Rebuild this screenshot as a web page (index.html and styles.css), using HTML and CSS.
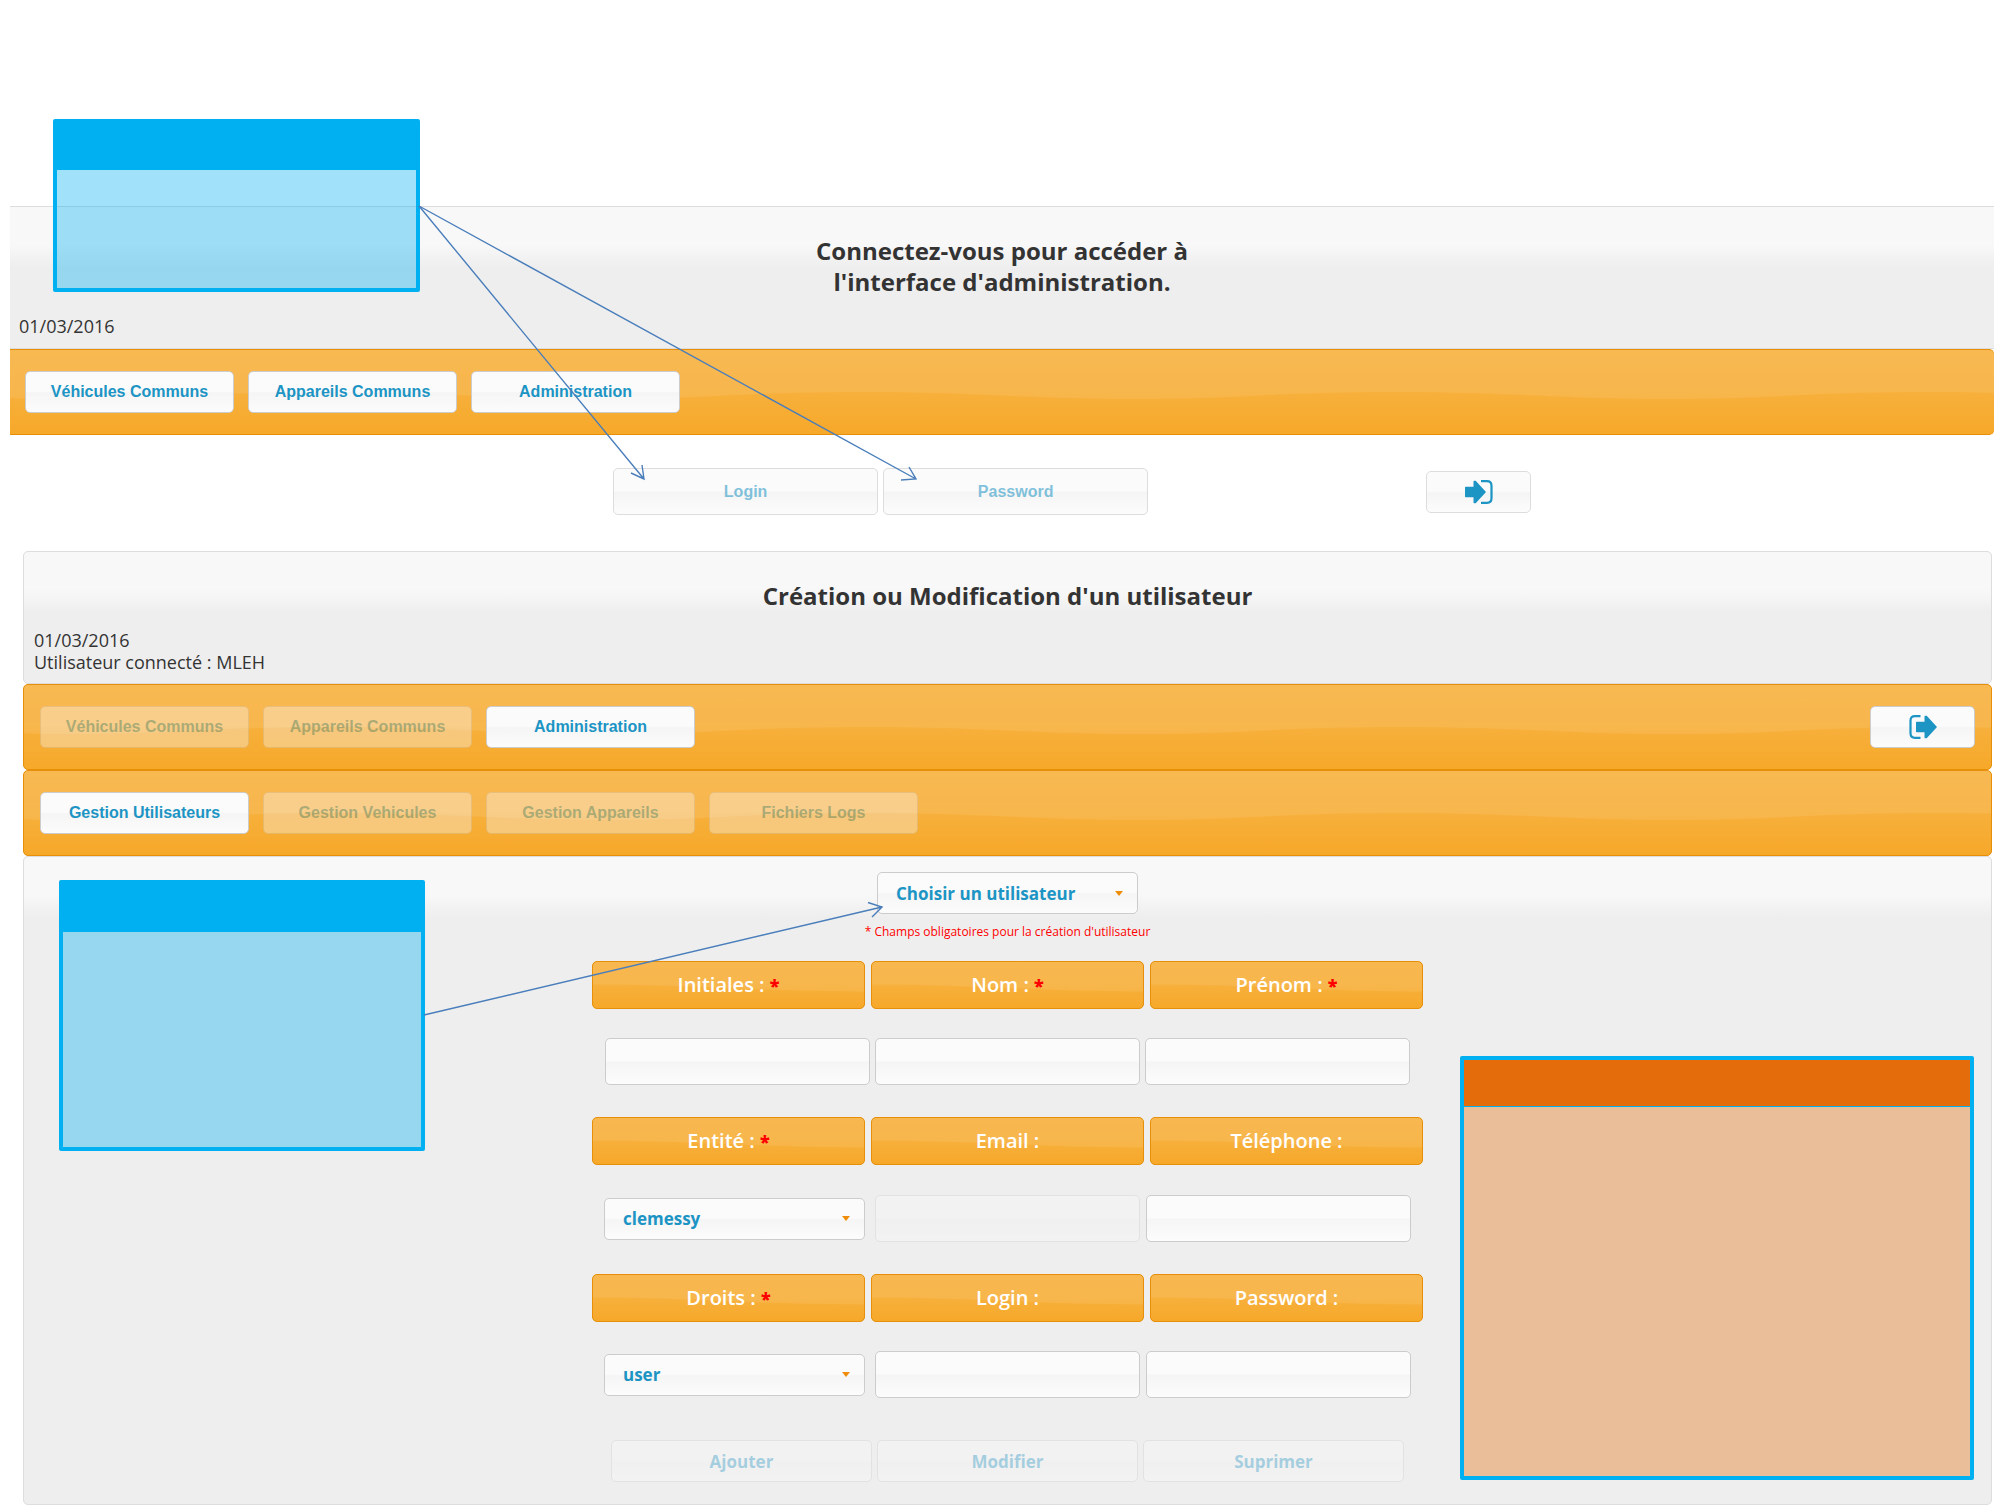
FILE: index.html
```
<!DOCTYPE html>
<html lang="fr">
<head>
<meta charset="utf-8">
<title>Administration</title>
<link rel="stylesheet" href="styles.css">
</head>
<body>
<section class="login-screen">
  <header class="panel panel-open">
    <h1 class="title">Connectez-vous pour accéder à<br>l'interface d'administration.</h1>
    <p class="meta">01/03/2016</p>
  </header>
  <nav class="bar bar-open">
    <button class="btn" type="button">Véhicules Communs</button>
    <button class="btn" type="button">Appareils Communs</button>
    <button class="btn" type="button">Administration</button>
  </nav>
  <form class="login-form">
    <input class="field" type="text" placeholder="Login" aria-label="Login">
    <input class="field" type="password" placeholder="Password" aria-label="Password">
    <button class="btn btn-icon btn-enter" type="button" aria-label="Connexion">
      <svg width="28" height="24" viewBox="0 0 28 24"><path fill="#1c94c4" d="M0 7.500q0-.7.700-.7H8.500V1.500q0-1 1-.8h1.200L21 12 10.700 23.300H9.500q-1 .2-1-.8V17.200H.700Q0 17.200 0 16.500z"/><path fill="none" stroke="#1c94c4" stroke-width="2.200" d="M16 1.200h6q4.500 0 4.500 4.500v12.600q0 4.500-4.500 4.500h-6"/></svg>
    </button>
  </form>
</section>

<section class="user-screen">
  <header class="panel panel-user">
    <h2 class="title">Création ou Modification d'un utilisateur</h2>
    <p class="meta">01/03/2016<br>Utilisateur connecté : MLEH</p>
  </header>
  <nav class="bar">
    <button class="btn" type="button" disabled>Véhicules Communs</button>
    <button class="btn" type="button" disabled>Appareils Communs</button>
    <button class="btn" type="button">Administration</button>
    <button class="btn btn-icon btn-exit" type="button" aria-label="Déconnexion">
      <svg width="28" height="24" viewBox="0 0 28 24"><path fill="#1c94c4" d="M7 7.500q0-.7.700-.7H15.500V1.500q0-1 1-.8h1.200L28 12 17.700 23.300H16.500q-1 .2-1-.8V17.200H7.700Q7 17.200 7 16.500z"/><path fill="none" stroke="#1c94c4" stroke-width="2.200" d="M11.500 1.200H6Q1.500 1.200 1.500 5.700v12.600q0 4.500 4.500 4.500h5.500"/></svg>
    </button>
  </nav>
  <nav class="bar">
    <button class="btn" type="button">Gestion Utilisateurs</button>
    <button class="btn" type="button" disabled>Gestion Vehicules</button>
    <button class="btn" type="button" disabled>Gestion Appareils</button>
    <button class="btn" type="button" disabled>Fichiers Logs</button>
  </nav>
  <form class="panel user-form">
    <select class="choice" aria-label="Utilisateur"><option>Choisir un utilisateur</option></select>
    <p class="note">* Champs obligatoires pour la création d'utilisateur</p>
    <div class="row labels">
      <label class="label" for="initiales">Initiales : <b class="req">*</b></label>
      <label class="label" for="nom">Nom : <b class="req">*</b></label>
      <label class="label" for="prenom">Prénom : <b class="req">*</b></label>
    </div>
    <div class="row row-text">
      <input class="field" id="initiales" type="text">
      <input class="field" id="nom" type="text">
      <input class="field" id="prenom" type="text">
    </div>
    <div class="row labels">
      <label class="label" for="entite">Entité : <b class="req">*</b></label>
      <label class="label" for="email">Email :</label>
      <label class="label" for="telephone">Téléphone :</label>
    </div>
    <div class="row">
      <select class="choice choice-row" id="entite"><option>clemessy</option></select>
      <input class="field" id="email" type="text" disabled>
      <input class="field" id="telephone" type="text">
    </div>
    <div class="row labels">
      <label class="label" for="droits">Droits : <b class="req">*</b></label>
      <label class="label" for="login">Login :</label>
      <label class="label" for="password">Password :</label>
    </div>
    <div class="row">
      <select class="choice choice-row" id="droits"><option>user</option></select>
      <input class="field" id="login" type="text">
      <input class="field" id="password" type="password">
    </div>
    <div class="actions">
      <button class="btn btn-action" type="button" disabled>Ajouter</button>
      <button class="btn btn-action" type="button" disabled>Modifier</button>
      <button class="btn btn-action" type="button" disabled>Suprimer</button>
    </div>
  </form>
</section>

<aside class="callout callout-login"></aside>
<aside class="callout callout-user"></aside>
<aside class="callout callout-form"></aside>
<svg class="arrows" width="930" height="1030" fill="none" stroke="#4a7ebb" stroke-width="1.4">
  <path d="M419 206L644 479M631 473L644 479L642 465"/>
  <path d="M419 206L916 479M901 480L916 479L909 467"/>
  <path d="M424 1015L882 907M868 902.500L882 907L872 917"/>
</svg>
</body>
</html>
```
FILE: styles.css
```
* { box-sizing: border-box; }

body {
  position: relative;
  margin: 0;
  padding: 206px 0 7px;
  background: #fff;
  color: #333;
  font-family: "Open Sans", "Noto Sans", sans-serif;
}

.login-screen { margin: 0 22px 0 10px; }
.user-screen { margin: 0 24px 0 23px; }

.panel {
  border: 1px solid #ddd;
  border-radius: 5px;
  background: #eee linear-gradient(#f8f8f8 0, #f8f8f8 38px, #eee 60px);
}
.panel-open {
  height: 143px;
  padding: 28px 9px 0;
  border-width: 1px 0;
  border-radius: 0;
}
.panel-user { height: 133px; padding: 28px 10px 0; }

.title {
  margin: 0;
  font-size: 24px;
  font-weight: 700;
  line-height: 31px;
  text-align: center;
}
.meta { margin: 18px 0 0; font-size: 18px; line-height: 22px; }

.bar, .label {
  border: 1px solid #e78f08;
  border-radius: 5px;
  background:
    url("data:image/svg+xml,%3Csvg xmlns='http://www.w3.org/2000/svg' width='533' height='107'%3E%3Cdefs%3E%3ClinearGradient id='g' x2='0' y2='1'%3E%3Cstop stop-color='%23fff' stop-opacity='.12'/%3E%3Cstop offset='1' stop-color='%23fff' stop-opacity='.08'/%3E%3C/linearGradient%3E%3C/defs%3E%3Cpath fill='url(%23g)' d='M0 0H533V56C500 58 450 60 400 60C300 60 233 53 133 53C83 53 33 54 0 56Z'/%3E%3C/svg%3E") 50% 50% repeat-x,
    linear-gradient(#f7b03c 50%, #f6a829) #f6a828;
}
.bar {
  display: flex;
  gap: 14px;
  padding: 21px 16px;
}
.bar-open { padding-left: 15px; border-width: 1px 0; border-radius: 0 5px 5px 0; }

.btn, .field, .choice {
  border: 1px solid #ccc;
  border-radius: 5px;
  background: linear-gradient(#fbfbfb 48%, #f5f5f5 52%, #fcfcfc);
  color: #1c94c4;
  font: bold 16px "Liberation Sans", Arial, sans-serif;
}
.btn { width: 209px; height: 42px; padding: 0; }
.btn:disabled, .field:disabled { opacity: .35; }
.btn-icon { width: 105px; }
.btn-icon svg { display: block; margin: auto; }
.btn-exit { margin-left: auto; }

.field { width: 265px; height: 47px; padding: 0 10px; text-align: center; }
.field::placeholder { color: #1c94c4; opacity: .55; }

.login-form {
  display: flex;
  align-items: center;
  gap: 5px;
  padding: 33px 0 36px 30.4%;
}
.login-form .field, .btn-enter { border-color: #ddd; }
.btn-enter { margin-left: 273px; }

.user-form {
  display: flex;
  flex-direction: column;
  align-items: center;
  padding: 15px 0 22px;
}
.choice {
  width: 261px;
  height: 42px;
  padding: 0 18px;
  appearance: none;
  background:
    url("data:image/svg+xml,%3Csvg xmlns='http://www.w3.org/2000/svg' width='8' height='5'%3E%3Cpath fill='%23ef8c08' d='M0 0h8L4 5z'/%3E%3C/svg%3E") right 14px center no-repeat,
    linear-gradient(#fbfbfb 48%, #f5f5f5 52%, #fcfcfc);
  font: 700 17px "Open Sans", "Noto Sans", sans-serif;
}
.choice-row { margin-right: 4px; }
.note { margin: 7px 0 18px; color: #f00; font-size: 12px; line-height: 22px; }

.row { display: flex; align-items: center; gap: 6px; height: 47px; margin-bottom: 32px; }
.row-text { gap: 5px; }
.labels { height: 48px; margin-bottom: 29px; }
.row-text + .labels { margin-bottom: 30px; }
.label {
  width: 273px;
  height: 48px;
  color: #fff;
  font-size: 20px;
  font-weight: 600;
  line-height: 46px;
  text-align: center;
}
.req { color: #f00; font-size: 18px; }

.actions { display: flex; gap: 5px; margin-top: 10px; }
.btn-action { width: 261px; font: 700 17px "Open Sans", "Noto Sans", sans-serif; }

/* Callouts laid over the two screens */
.callout {
  position: absolute;
  border: 4px solid #00b0f0;
  border-radius: 2px;
  background: linear-gradient(#00b0f0 48px, rgba(0, 176, 240, .37) 48px) padding-box;
}
.callout-login {
  left: 53px;
  top: 119px;
  width: 367px;
  height: 173px;
  background: linear-gradient(#00b0f0 47px, rgba(0, 176, 240, .37) 47px) padding-box;
}
.callout-user { left: 59px; top: 880px; width: 366px; height: 271px; }
.callout-form {
  right: 42px;
  top: 1056px;
  width: 514px;
  height: 424px;
  background: linear-gradient(#e46c0a 46px, #00b0f0 46px, #00b0f0 47px, #eabe99 47px);
}
.arrows { position: absolute; left: 0; top: 0; pointer-events: none; }
```
